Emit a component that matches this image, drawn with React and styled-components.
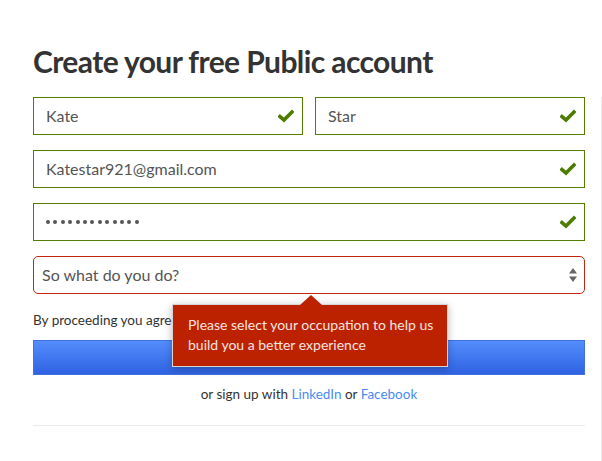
import React from "react";
import styled, { createGlobalStyle } from "styled-components";

const Global = createGlobalStyle`
  html, body { margin: 0; padding: 0; background: #fff; }
  body { font-family: Lato, "Open Sans", sans-serif; color: #333; }
  * { box-sizing: border-box; }
`;

const Page = styled.div`
  display: flex;
  width: 602px;
  min-height: 461px;
`;

const Main = styled.main`
  width: 601px;
  padding: 42px 16px 0 33px;
`;

const Side = styled.div`
  flex: 1;
  margin-top: 97px;
  border-left: 1px solid #ececec;
`;

const Title = styled.h1`
  margin: 0 0 17px;
  font-size: 30px;
  line-height: 38px;
  font-weight: 700;
  letter-spacing: -0.6px;
  color: #333;
`;

const Form = styled.div`
  display: flex;
  flex-direction: column;
  gap: 15px;
`;

const Row = styled.div`
  display: grid;
  grid-template-columns: 1fr 1fr;
  gap: 12px;
`;

const Field = styled.div`
  display: flex;
  align-items: center;
  justify-content: space-between;
  height: 38px;
  padding: 0 8px 1px 12px;
  border: 1px solid ${(p) => (p.$error ? "#c2260f" : "#537e00")};
  border-radius: ${(p) => (p.$error ? "5px" : "0")};
  background: #fff;
  font-size: 16px;
  color: #555;
  position: relative;
`;

const Value = styled.span``;

const Dots = styled.span`
  display: flex;
  gap: 3.4px;
`;

const Dot = styled.span`
  width: 4px;
  height: 4px;
  border-radius: 50%;
  background: #555;
`;

const SelectField = styled(Field)`
  padding-left: 8px;
  padding-right: 6px;
`;

const Tooltip = styled.div`
  position: absolute;
  top: calc(100% + 11px);
  left: 138px;
  width: 276px;
  padding: 10px 6px 11px 15px;
  background: #bc2200;
  border: 1px solid #d6d6d6;
  box-shadow: 0 2px 8px rgba(0, 0, 0, 0.28);
  color: #f6e4e0;
  font-size: 14px;
  line-height: 20px;
  z-index: 2;
  &::before {
    content: "";
    position: absolute;
    top: -10px;
    left: 127px;
    border-left: 11px solid transparent;
    border-right: 11px solid transparent;
    border-bottom: 10px solid #bc2200;
  }
`;

const Agree = styled.p`
  margin: 2px 0 0;
  font-size: 13.5px;
  line-height: 18px;
  color: #333;
`;

const Submit = styled.button`
  display: block;
  width: 100%;
  height: 35px;
  margin-top: 11px;
  border: 1px solid #3f72dc;
  background: linear-gradient(#548dfd, #2f62e2);
`;

const Alt = styled.p`
  margin: 10px 0 0;
  text-align: center;
  font-size: 13.5px;
  line-height: 18px;
  color: #333;
`;

const Link = styled.a`
  color: #4b8cf2;
  text-decoration: none;
`;

const Divider = styled.hr`
  margin: 22px 0 0;
  border: 0;
  border-top: 1px solid #ebebeb;
`;

function CheckMark() {
  return (
    <svg width="16" height="14" viewBox="0 0 16 14">
      <path
        d="M2 7.5 L6 11 L14 3"
        fill="none"
        stroke="#4e7c00"
        strokeWidth="3.6"
        strokeLinecap="square"
        strokeLinejoin="miter"
      />
    </svg>
  );
}

function SortArrows() {
  return (
    <svg width="10" height="16" viewBox="0 0 10 16">
      <path d="M5 1 L9 6.5 L1 6.5 Z" fill="#666" />
      <path d="M5 15 L9 9.5 L1 9.5 Z" fill="#666" />
    </svg>
  );
}

export default function App() {
  return (
    <>
      <Global />
      <Page>
        <Main>
          <Title>Create your free Public account</Title>
          <Form>
            <Row>
              <Field>
                <Value>Kate</Value>
                <CheckMark />
              </Field>
              <Field>
                <Value>Star</Value>
                <CheckMark />
              </Field>
            </Row>
            <Field>
              <Value>Katestar921@gmail.com</Value>
              <CheckMark />
            </Field>
            <Field>
              <Dots>
                {Array.from({ length: 13 }).map((_, i) => (
                  <Dot key={i} />
                ))}
              </Dots>
              <CheckMark />
            </Field>
            <SelectField $error>
              <Value>So what do you do?</Value>
              <SortArrows />
              <Tooltip>
                Please select your occupation to help us build you a better
                experience
              </Tooltip>
            </SelectField>
            <Agree>By proceeding you agree to the Terms of Service</Agree>
          </Form>
          <Submit type="button" aria-label="Create account" />
          <Alt>
            or sign up with <Link href="#">LinkedIn</Link> or{" "}
            <Link href="#">Facebook</Link>
          </Alt>
          <Divider />
        </Main>
        <Side />
      </Page>
    </>
  );
}
